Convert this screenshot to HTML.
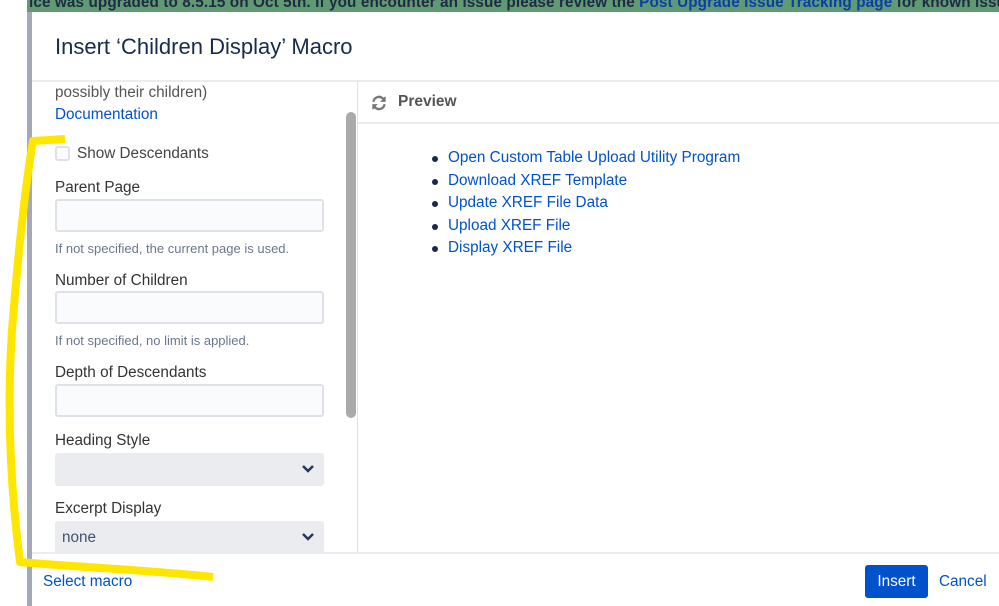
<!DOCTYPE html>
<html><head><style>
*{box-sizing:border-box;margin:0;padding:0}
body{width:999px;height:606px;overflow:hidden;background:#fff;font-family:"Liberation Sans",sans-serif;position:relative}
.banner{position:absolute;left:27px;top:0;width:972px;height:12px;background:#5f9a72;overflow:hidden}
.banner span{position:absolute;left:2px;top:-6px;font:bold 15.3px "Liberation Sans",sans-serif;color:#1f2a44;white-space:nowrap;letter-spacing:0.1px}
.banner a{color:#0b3fa8}
.strip{position:absolute;left:27px;top:12px;width:5px;height:594px;background:#a3a9b7}
.dlg{position:absolute;left:32px;top:12px;width:967px;height:594px;background:#fff}
h1{position:absolute;left:23px;top:22px;font-size:22px;font-weight:normal;color:#172b4d}
.hl{position:absolute;left:0;top:68px;width:967px;height:2px;background:#ebecf0}
.left{position:absolute;left:0;top:70px;width:325px;height:470px;overflow:hidden;color:#333}
.vl{position:absolute;left:325px;top:70px;width:1px;height:470px;background:#dfe1e6}
.t{position:absolute;left:23px;font-size:15.3px}
.lbl{position:absolute;left:23px;font-size:15.3px;color:#333}
.in{position:absolute;left:23px;width:269px;height:33px;border:2px solid #dfe1e6;border-radius:3px;background:#fafbfc}
.sel{position:absolute;left:23px;width:269px;height:33px;background:#ebecf0;border-radius:3px;font-size:15.3px;color:#42526e;padding:8px 0 0 7px}
.sel svg{position:absolute;right:9px;top:11px}
.hint{position:absolute;left:23px;font-size:13px;color:#6b778c}
.sb{position:absolute;left:314px;top:30px;width:10px;height:306px;background:#aaa;border-radius:5px}
.prev{position:absolute;left:326px;top:70px;width:641px;height:42px;border-bottom:2px solid #ebecf0}
.prev b{position:absolute;left:40px;top:11px;font-size:15.5px;color:#555}
ul{position:absolute;left:416px;top:137px;list-style:none}
li{font-size:15.3px;color:#0052cc;height:22.6px;position:relative;white-space:nowrap}
li:before{content:"";position:absolute;left:-16px;top:7px;width:6px;height:6px;border-radius:50%;background:#172b4d}
.fl{position:absolute;left:0;top:540px;width:967px;height:2px;background:#ebecf0}
.btn{position:absolute;left:833px;top:553px;width:63px;height:33px;background:#0052cc;border-radius:3px;color:#fff;font-size:15.3px;text-align:center;line-height:33px}
.cancel{position:absolute;left:907px;top:561px;font-size:15.3px;color:#0052cc}
.selm{position:absolute;left:11px;top:561px;font-size:15.3px;color:#0052cc}
</style></head><body>
<div class="banner"><span>ice was upgraded to 8.5.15 on Oct 5th. If you encounter an issue please review the <a>Post Upgrade Issue Tracking page</a> for known issues</span></div>
<div class="strip"></div>
<div class="dlg">
<h1>Insert ‘Children Display’ Macro</h1>
<div class="hl"></div>
<div class="left">
<div class="t" style="top:2px;color:#555">possibly their children)</div>
<div class="t" style="top:24px;color:#0052cc">Documentation</div>
<div style="position:absolute;left:23px;top:64px;width:15px;height:15px;border:2px solid #dfe1e6;border-radius:3px;background:#fafbfc"></div>
<div class="t" style="top:63px;left:45px;color:#444">Show Descendants</div>
<div class="lbl" style="top:97px">Parent Page</div>
<div class="in" style="top:117px"></div>
<div class="hint" style="top:159px">If not specified, the current page is used.</div>
<div class="lbl" style="top:190px">Number of Children</div>
<div class="in" style="top:209px"></div>
<div class="hint" style="top:251px">If not specified, no limit is applied.</div>
<div class="lbl" style="top:282px">Depth of Descendants</div>
<div class="in" style="top:302px"></div>
<div class="lbl" style="top:350px">Heading Style</div>
<div class="sel" style="top:371px"><svg width="14" height="10" viewBox="0 0 14 10"><path d="M2 2l5 5 5-5" stroke="#253858" stroke-width="2.5" fill="none"/></svg></div>
<div class="lbl" style="top:418px">Excerpt Display</div>
<div class="sel" style="top:439px">none<svg width="14" height="10" viewBox="0 0 14 10"><path d="M2 2l5 5 5-5" stroke="#253858" stroke-width="2.5" fill="none"/></svg></div>
<div class="sb"></div>
</div>
<div class="vl"></div>
<div class="prev"><svg style="position:absolute;left:11px;top:11px" width="20" height="20" viewBox="0 0 18 18"><path d="M3 8a6 6 0 0 1 10-4l2-1v5h-5l2-2a4 4 0 0 0-7 2z M15 10a6 6 0 0 1-10 4l-2 1v-5h5l-2 2a4 4 0 0 0 7-2z" fill="#777"/></svg><b>Preview</b></div>
<ul><li>Open Custom Table Upload Utility Program</li><li>Download XREF Template</li><li>Update XREF File Data</li><li>Upload XREF File</li><li>Display XREF File</li></ul>
<div class="fl"></div>
<div class="selm">Select macro</div>
<div class="btn">Insert</div>
<div class="cancel">Cancel</div>
</div>
<svg style="position:absolute;left:0;top:0" width="999" height="606"><path d="M65 139L33 141C28 170 20 230 12 330C6 420 12 500 20 562C60 566 150 570 213 577" stroke="#ffe600" stroke-width="8" fill="none" stroke-linejoin="round"/></svg>
</body></html>
